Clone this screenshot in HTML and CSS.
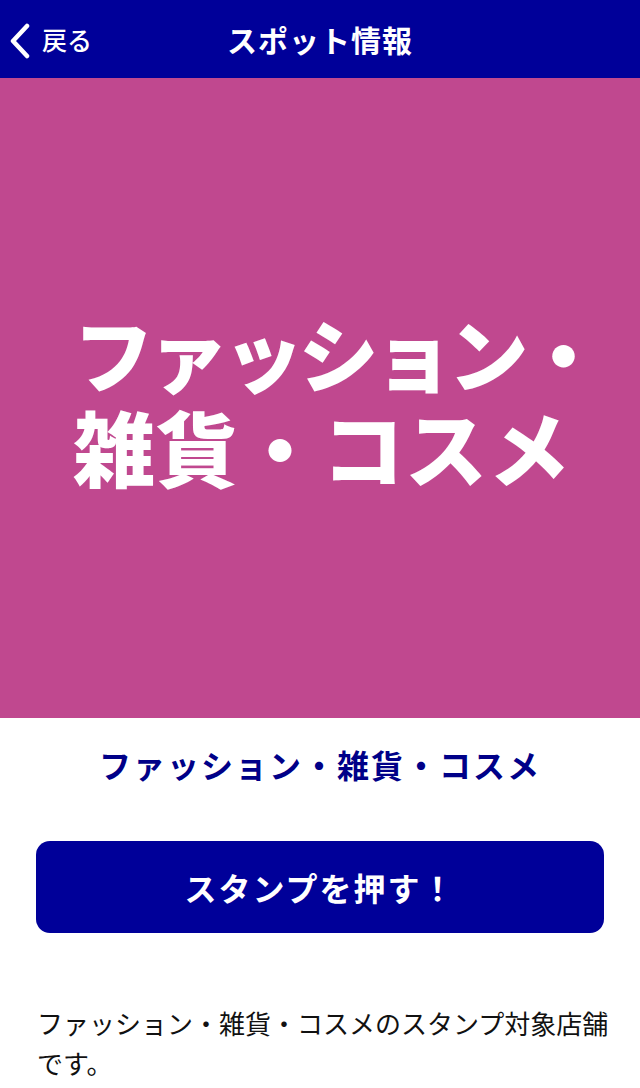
FILE: index.html
```html
<!DOCTYPE html>
<html lang="ja">
<head>
<meta charset="utf-8">
<link rel="stylesheet" href="styles.css">
</head>
<body>
<header class="topbar">
  <div class="back">
    <svg class="chev" width="24" height="36" viewBox="0 0 24 36"><path d="M19 3 L5 18 L19 33" fill="none" stroke="#fff" stroke-width="4.5" stroke-linecap="round" stroke-linejoin="round"/></svg>
    <span class="back-label">戻る</span>
  </div>
  <h1 class="title">スポット情報</h1>
</header>
<div class="hero">
  <div class="hero-text">
    <div class="hero-line">ファッション・</div>
    <div class="hero-line">雑貨・コスメ</div>
  </div>
</div>
<h2 class="spot-name">ファッション・雑貨・コスメ</h2>
<div class="btn-wrap"><button class="stamp-btn">スタンプを押す！</button></div>
<p class="desc">ファッション・雑貨・コスメのスタンプ対象店舗です。</p>
</body>
</html>
```
FILE: styles.css
```css
* { box-sizing: border-box; }
body {
  margin: 0;
  font-family: "Noto Sans CJK JP", "Noto Sans", sans-serif;
  background: #fff;
  width: 640px;
}
.topbar {
  position: relative;
  height: 78px;
  background: #000099;
  display: flex;
  align-items: center;
  justify-content: center;
  color: #fff;
}
.back {
  position: absolute;
  left: 8px;
  top: 0;
  height: 78px;
  display: flex;
  align-items: center;
  gap: 10px;
}
.chev { display: block; margin-top: 4px; }
.back-label {
  font-size: 25px;
  font-weight: 500;
  line-height: 1;
}
.title {
  margin: 0;
  font-size: 30px;
  font-weight: 700;
  line-height: 1;
  letter-spacing: 1px;
}
.hero {
  height: 640px;
  background: #C0488F;
  display: flex;
  align-items: center;
  justify-content: center;
}
.hero-text {
  color: #fff;
  font-weight: 900;
  font-size: 80px;
  line-height: 1;
  text-align: center;
  margin-top: 1px;
  display: flex;
  flex-direction: column;
  align-items: center;
  gap: 14px;
}
.hero-line { white-space: nowrap; }
.hero-line:first-child { letter-spacing: -5px; margin-left: 32px; }
.hero-line:last-child { font-size: 82px; letter-spacing: 1px; margin-left: 4px; }
.spot-name {
  margin: 24px 0 0;
  text-align: center;
  color: #000088;
  font-size: 32px;
  font-weight: 700;
  line-height: 44px;
  letter-spacing: 2px;
}
.btn-wrap {
  padding: 0 36px;
  margin-top: 55px;
}
.stamp-btn {
  display: block;
  width: 100%;
  height: 92px;
  border: none;
  border-radius: 14px;
  background: #000099;
  color: #fff;
  font-family: inherit;
  font-size: 32px;
  font-weight: 700;
  letter-spacing: 2px;
}
.desc {
  margin: 70px 0 0;
  padding: 0 20px 0 37px;
  font-size: 26px;
  line-height: 40px;
  color: #111;
}
```
